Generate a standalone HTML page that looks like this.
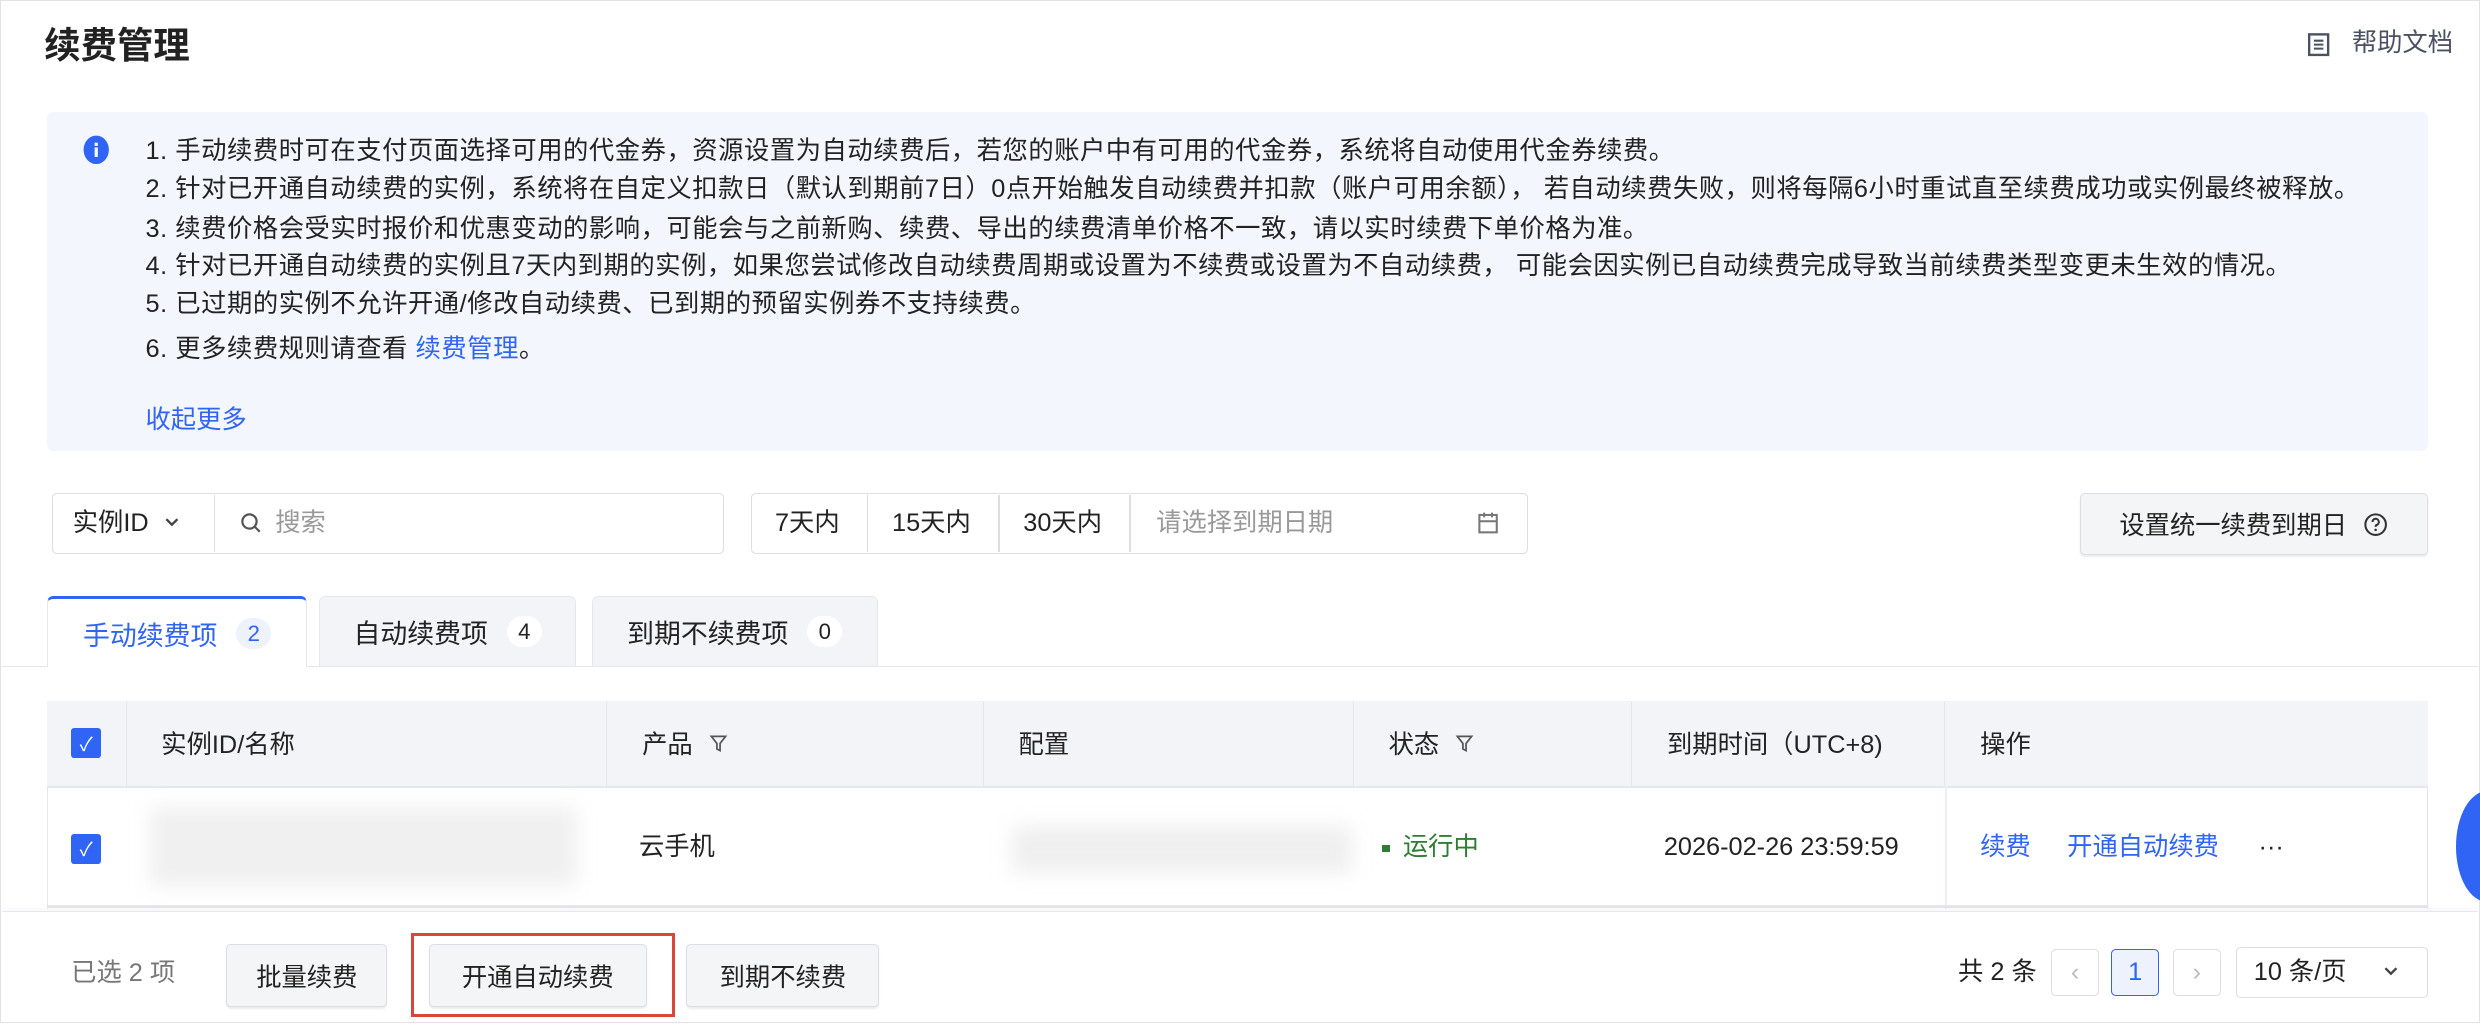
<!DOCTYPE html>
<html><head><meta charset="utf-8"><style>
html{zoom:1.5816}
*{box-sizing:border-box;margin:0;padding:0}
body{width:1568px;height:647px;position:relative;background:#fff;font-family:"Liberation Sans","Noto Sans CJK SC",sans-serif;font-size:16px;color:#222;overflow:hidden}
.a{position:absolute}
.frame{left:0;top:0;width:1568px;height:647px;border:1px solid #e3e3e6}
.t{white-space:nowrap;line-height:20px}
.info{left:30px;top:71px;width:1505px;height:214px;background:#f3f6fd;border-radius:4px}
.line{left:92px;color:#222;font-size:16px;letter-spacing:0.35px}
.box{border:1px solid #dcdee3;background:#fff}
.btn{border:1px solid #dcdee3;background:#f4f5f7;border-radius:3px;display:flex;align-items:center;justify-content:center;box-shadow:0 1px 1px rgba(0,0,0,.08)}
.th{top:443px;height:54px;background:#f3f4f7;border-right:1px solid #e6e7ea;display:flex;align-items:center;padding-left:22px}
.cb{width:19px;height:19px;background:#2f64f5;border-radius:2px;color:#fff;font-size:12px;display:flex;align-items:center;justify-content:center}
.badge{display:inline-block;min-width:22px;height:20px;border-radius:10px;background:#fff;text-align:center;line-height:20px;font-size:14px;margin-left:12px}
.blue{color:#2f64f5}
</style></head><body>
<div class="a frame"></div>
<div class="a t" style="left:28px;top:16px;font-size:23px;line-height:26px;font-weight:bold;color:#222">续费管理</div>
<svg class="a" style="left:1458px;top:20px" width="16" height="16" viewBox="0 0 16 16"><rect x="2" y="1.5" width="12" height="13" fill="none" stroke="#4b5160" stroke-width="1.5"/><path d="M5 5.5h6M5 8h6M5 10.5h6" stroke="#4b5160" stroke-width="1.3"/></svg>
<div class="a t" style="left:1487px;top:18px;color:#4b5160">帮助文档</div>

<div class="a info"></div>
<svg class="a" style="left:52px;top:85px" width="18" height="20" viewBox="0 0 18 20"><ellipse cx="9" cy="10" rx="8" ry="9" fill="#2f64f5"/><rect x="8" y="8.5" width="2" height="6" fill="#fff"/><rect x="8" y="5.5" width="2" height="2" fill="#fff"/></svg>
<div class="a t line" style="top:86px">1. 手动续费时可在支付页面选择可用的代金券，资源设置为自动续费后，若您的账户中有可用的代金券，系统将自动使用代金券续费。</div>
<div class="a t line" style="top:110px">2. 针对已开通自动续费的实例，系统将在自定义扣款日（默认到期前7日）0点开始触发自动续费并扣款（账户可用余额）， 若自动续费失败，则将每隔6小时重试直至续费成功或实例最终被释放。</div>
<div class="a t line" style="top:135px">3. 续费价格会受实时报价和优惠变动的影响，可能会与之前新购、续费、导出的续费清单价格不一致，请以实时续费下单价格为准。</div>
<div class="a t line" style="top:159px">4. 针对已开通自动续费的实例且7天内到期的实例，如果您尝试修改自动续费周期或设置为不续费或设置为不自动续费， 可能会因实例已自动续费完成导致当前续费类型变更未生效的情况。</div>
<div class="a t line" style="top:183px">5. 已过期的实例不允许开通/修改自动续费、已到期的预留实例券不支持续费。</div>
<div class="a t line" style="top:211px">6. 更多续费规则请查看 <span class="blue">续费管理</span>。</div>
<div class="a t blue" style="left:92px;top:256px">收起更多</div>

<div class="a box" style="left:33px;top:312px;width:425px;height:38px;border-radius:3px"></div>
<div class="a" style="left:135px;top:313px;width:1px;height:36px;background:#dcdee3"></div>
<div class="a t" style="left:46px;top:321px">实例ID</div>
<svg class="a" style="left:104px;top:326px" width="10" height="8" viewBox="0 0 10 8"><path d="M1.5 2l3.5 3.5L8.5 2" fill="none" stroke="#444" stroke-width="1.5"/></svg>
<svg class="a" style="left:152px;top:324px" width="14" height="14" viewBox="0 0 14 14"><circle cx="6" cy="6" r="4.5" fill="none" stroke="#555" stroke-width="1.4"/><path d="M9.5 9.5l3 3" stroke="#555" stroke-width="1.4"/></svg>
<div class="a t" style="left:174px;top:321px;color:#999">搜索</div>

<div class="a box" style="left:475px;top:312px;width:491px;height:38px;border-radius:3px"></div>
<div class="a" style="left:548px;top:313px;width:1px;height:36px;background:#dcdee3"></div>
<div class="a" style="left:631px;top:313px;width:1px;height:36px;background:#dcdee3"></div>
<div class="a" style="left:714px;top:313px;width:1px;height:36px;background:#dcdee3"></div>
<div class="a t" style="left:490px;top:321px">7天内</div>
<div class="a t" style="left:564px;top:321px">15天内</div>
<div class="a t" style="left:647px;top:321px">30天内</div>
<div class="a t" style="left:731px;top:321px;color:#999">请选择到期日期</div>
<svg class="a" style="left:934px;top:323px" width="14" height="15" viewBox="0 0 14 15"><rect x="1.5" y="2.5" width="11" height="11" fill="none" stroke="#777" stroke-width="1.3"/><path d="M1.5 6.5h11M4.5 1v3M9.5 1v3" stroke="#777" stroke-width="1.3"/></svg>

<div class="a btn" style="left:1315px;top:312px;width:220px;height:39px">设置统一续费到期日 <svg style="margin-left:10px" width="16" height="16" viewBox="0 0 16 16"><circle cx="8" cy="8" r="6.5" fill="none" stroke="#333" stroke-width="1.3"/><path d="M6 6.3a2 2 0 1 1 2.6 1.9c-.5.2-.6.5-.6 1.2" fill="none" stroke="#333" stroke-width="1.3"/><circle cx="8" cy="11.3" r=".8" fill="#333"/></svg></div>

<div class="a" style="left:0;top:421px;width:1568px;height:1px;background:#e6e7ea"></div>
<div class="a" style="left:30px;top:377px;width:164px;height:45px;background:#fff;border:1px solid #e6e7ea;border-bottom:none;border-top:2px solid #2f64f5;border-radius:4px 4px 0 0;display:flex;align-items:center;justify-content:center;font-size:17px"><span class="blue">手动续费项</span><span class="badge blue" style="background:#eef2fd">2</span></div>
<div class="a" style="left:202px;top:377px;width:162px;height:44px;background:#f3f4f7;border:1px solid #e6e7ea;border-bottom:none;border-radius:4px 4px 0 0;display:flex;align-items:center;justify-content:center;font-size:17px">自动续费项<span class="badge">4</span></div>
<div class="a" style="left:374px;top:377px;width:181px;height:44px;background:#f3f4f7;border:1px solid #e6e7ea;border-bottom:none;border-radius:4px 4px 0 0;display:flex;align-items:center;justify-content:center;font-size:17px">到期不续费项<span class="badge">0</span></div>

<div class="a" style="left:30px;top:443px;width:1505px;height:132px;border:1px solid #e6e7ea;border-bottom:none;border-radius:4px 4px 0 0"></div>
<div class="a th" style="left:30px;width:50px;padding-left:15px"><div class="cb">✓</div></div>
<div class="a th" style="left:80px;width:304px">实例ID/名称</div>
<div class="a th" style="left:384px;width:238px">产品 <svg style="margin-left:10px" width="12" height="12" viewBox="0 0 12 12"><path d="M1.5 1.5h9L7 6v4.5L5 9.5V6z" fill="none" stroke="#555" stroke-width="1.1"/></svg></div>
<div class="a th" style="left:622px;width:234px">配置</div>
<div class="a th" style="left:856px;width:176px">状态 <svg style="margin-left:10px" width="12" height="12" viewBox="0 0 12 12"><path d="M1.5 1.5h9L7 6v4.5L5 9.5V6z" fill="none" stroke="#555" stroke-width="1.1"/></svg></div>
<div class="a th" style="left:1032px;width:198px">到期时间（UTC+8)</div>
<div class="a th" style="left:1230px;width:305px;border-right:none">操作</div>
<div class="a" style="left:30px;top:497px;width:1505px;height:1px;background:#e6e7ea"></div>
<div class="a" style="left:45px;top:527px"><div class="cb">✓</div></div>
<div class="a" style="left:95px;top:510px;width:270px;height:50px;background:#f0f0f0;filter:blur(6px)"></div>
<div class="a t" style="left:404px;top:526px">云手机</div>
<div class="a" style="left:640px;top:522px;width:215px;height:30px;background:#efefef;filter:blur(6px)"></div>
<div class="a" style="left:874px;top:534px;width:5px;height:5px;background:#2e7d32"></div>
<div class="a t" style="left:887px;top:526px;color:#2e7d32">运行中</div>
<div class="a t" style="left:1052px;top:526px">2026-02-26 23:59:59</div>
<div class="a" style="left:1230px;top:497px;width:1px;height:78px;background:#eee;box-shadow:-3px 0 6px rgba(0,0,0,.04)"></div>
<div class="a t blue" style="left:1252px;top:526px">续费</div>
<div class="a t blue" style="left:1307px;top:526px">开通自动续费</div>
<div class="a t" style="left:1428px;top:526px">···</div>
<div class="a" style="left:30px;top:572px;width:1505px;height:2px;background:#e6e7ea"></div>
<div class="a" style="left:1553px;top:500px;width:40px;height:70px;border-radius:50%;background:#2f64f5"></div>

<div class="a" style="left:1px;top:576px;width:1566px;height:70px;background:#fff;border-top:1px solid #e6e7ea;box-shadow:0 -2px 4px rgba(0,0,0,.03)"></div>
<div class="a t" style="left:45px;top:606px;color:#777">已选 2 项</div>
<div class="a btn" style="left:143px;top:597px;width:102px;height:40px">批量续费</div>
<div class="a" style="left:260px;top:590px;width:167px;height:53px;border:2px solid #d9473b"></div>
<div class="a btn" style="left:271px;top:597px;width:138px;height:40px">开通自动续费</div>
<div class="a btn" style="left:434px;top:597px;width:122px;height:40px">到期不续费</div>
<div class="a t" style="left:1238px;top:605px">共 2 条</div>
<div class="a box" style="left:1297px;top:600px;width:30px;height:30px;border-radius:3px;color:#bbb;display:flex;align-items:center;justify-content:center">‹</div>
<div class="a" style="left:1335px;top:600px;width:30px;height:30px;border:1px solid #2f64f5;background:#eef2fd;border-radius:3px;color:#2f64f5;display:flex;align-items:center;justify-content:center">1</div>
<div class="a box" style="left:1374px;top:600px;width:30px;height:30px;border-radius:3px;color:#bbb;display:flex;align-items:center;justify-content:center">›</div>
<div class="a box" style="left:1414px;top:599px;width:121px;height:32px;border-radius:3px"></div>
<div class="a t" style="left:1425px;top:605px">10 条/页</div>
<svg class="a" style="left:1507px;top:610px" width="10" height="8" viewBox="0 0 10 8"><path d="M1.5 2l3.5 3.5L8.5 2" fill="none" stroke="#444" stroke-width="1.5"/></svg>
</body></html>
